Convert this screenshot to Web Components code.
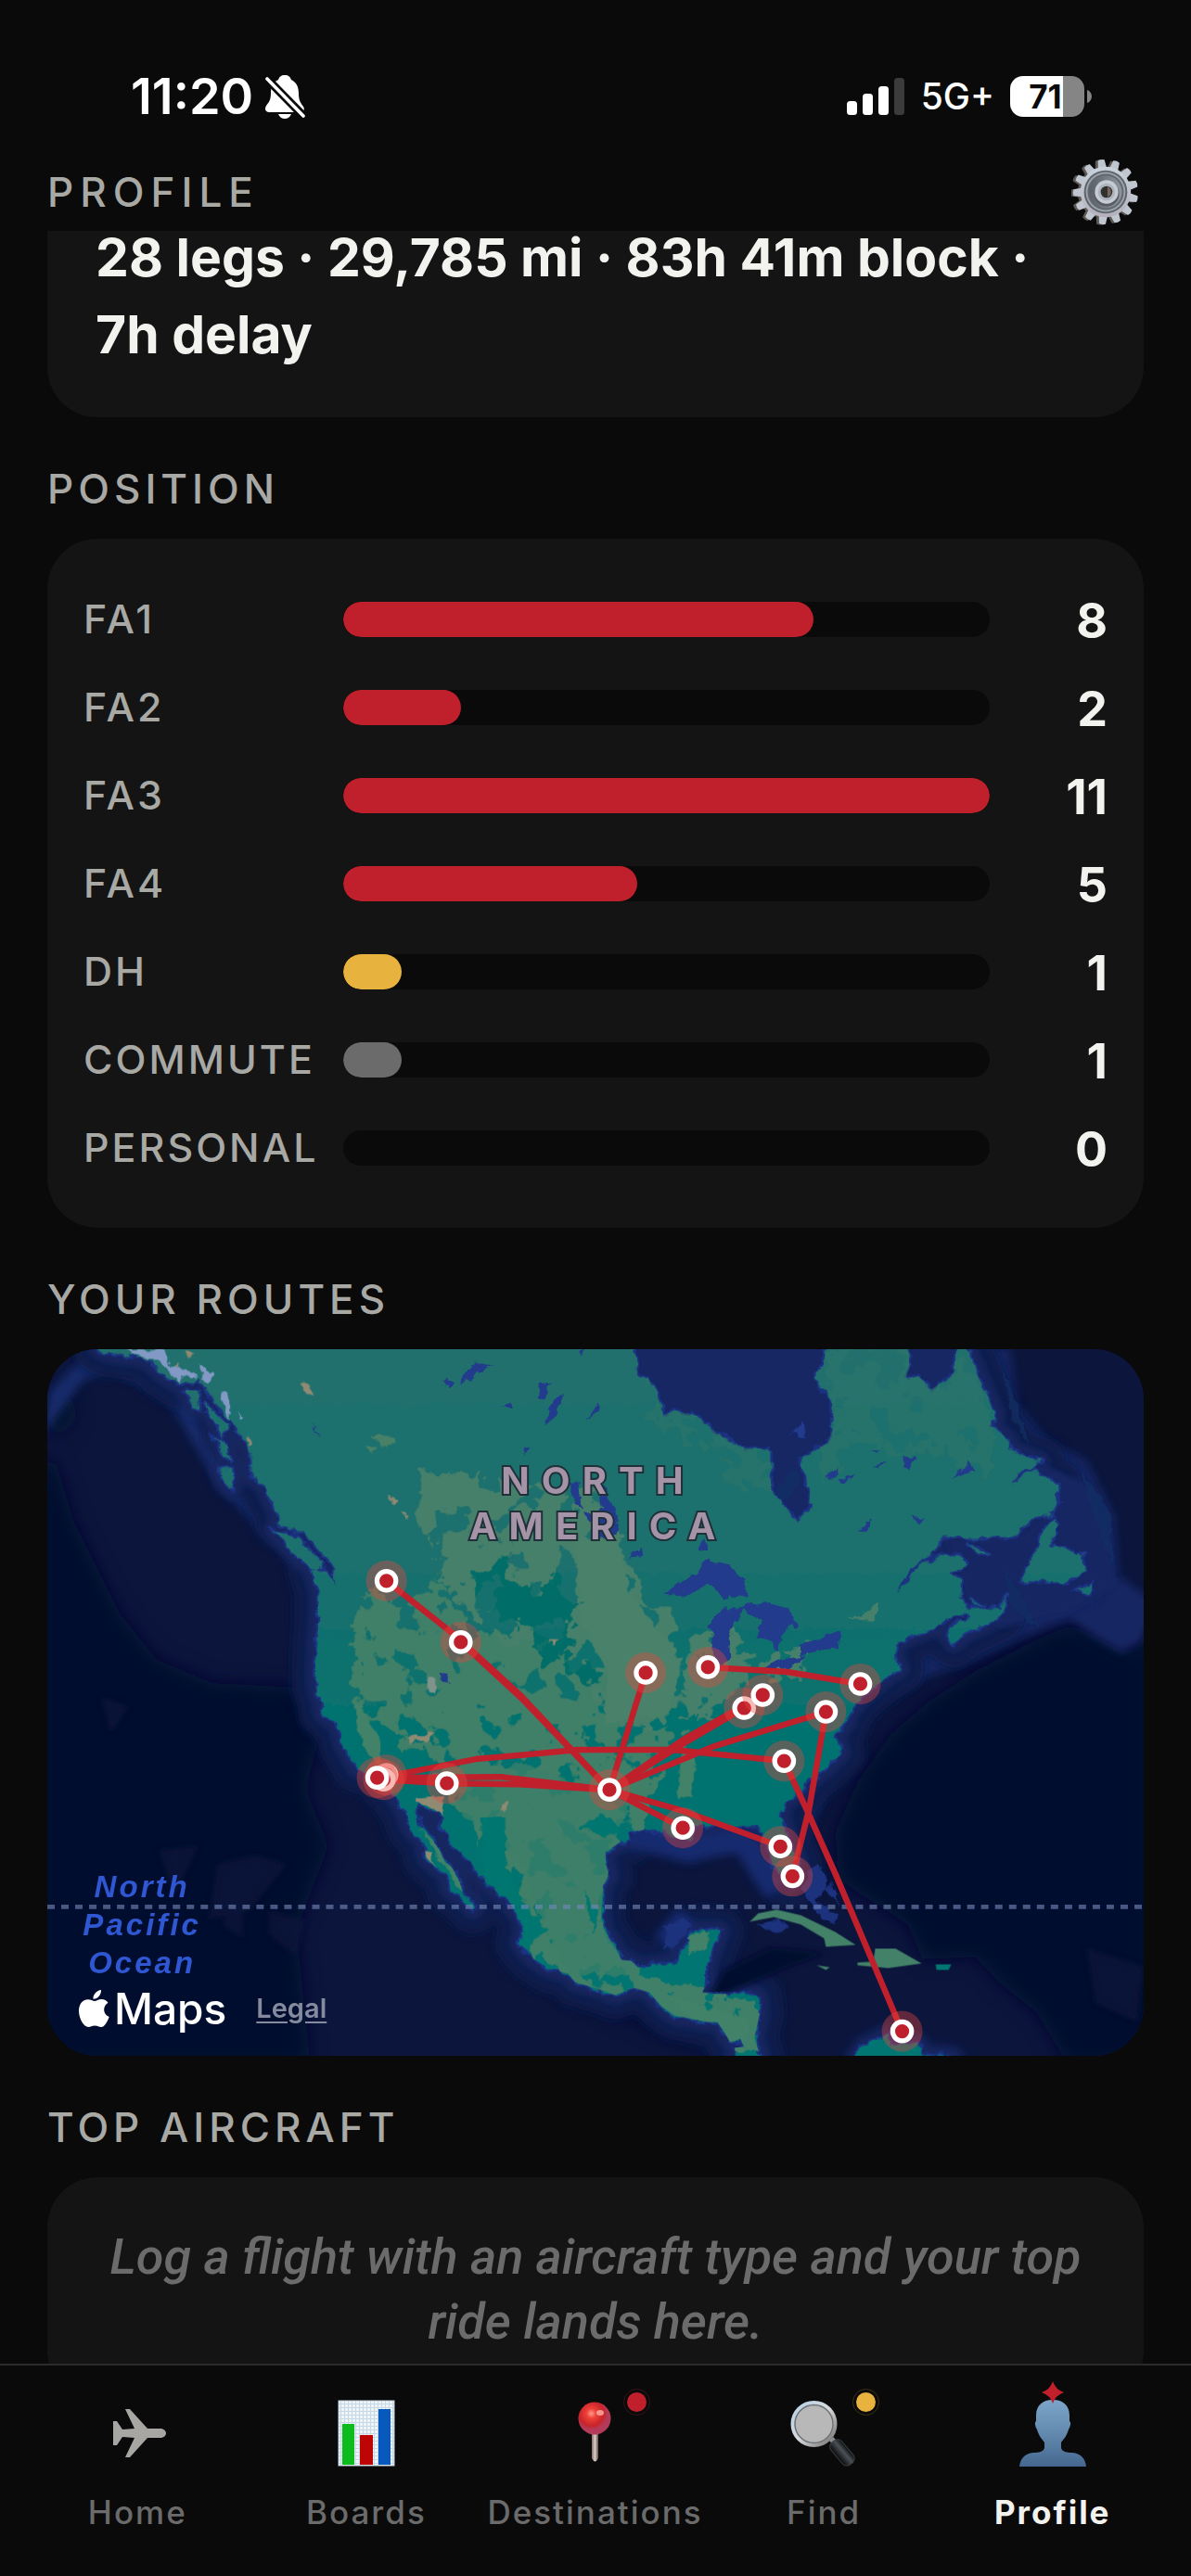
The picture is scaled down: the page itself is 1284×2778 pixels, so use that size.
<!DOCTYPE html>
<html lang="en">
<head>
<meta charset="utf-8">
<meta name="viewport" content="width=device-width, initial-scale=1">
<title>Profile</title>
<style>
  :root {
    --bg: #0a0a0a; --card: #141414; --track: #0a0a0a; --line: #2b2b2b;
    --text: #f2f2ef; --muted: #a8a8a5; --dim: #6b6b6b;
    --red: #c0202c; --gold: #e8b23f; --radius: 54px; --gutter: 51px;
  }
  * { box-sizing: border-box; }
  body {
    margin: 0; height: 100vh; display: flex; flex-direction: column; overflow: hidden;
    background: var(--bg); color: var(--text);
    font-family: Inter, "Liberation Sans", sans-serif; line-height: 1.2;
  }
  main { flex: 1; min-height: 0; padding: 0 var(--gutter); }
</style>
</head>
<body>
<status-bar></status-bar>
<page-header>PROFILE</page-header>
<main>
  <summary-card>28 legs · 29,785 mi · 83h 41m block · 7h delay</summary-card>
  <page-section heading="POSITION">
    <bar-list>
      <bar-row label="FA1" value="8" max="11"></bar-row>
      <bar-row label="FA2" value="2" max="11"></bar-row>
      <bar-row label="FA3" value="11" max="11"></bar-row>
      <bar-row label="FA4" value="5" max="11"></bar-row>
      <bar-row label="DH" value="1" max="11" style="--fill:#e8b23f"></bar-row>
      <bar-row label="COMMUTE" value="1" max="11" style="--fill:#6b6b6b"></bar-row>
      <bar-row label="PERSONAL" value="0" max="11"></bar-row>
    </bar-list>
  </page-section>
  <page-section heading="YOUR ROUTES"><route-map></route-map></page-section>
  <page-section heading="TOP AIRCRAFT">
    <empty-note>Log a flight with an aircraft type and your top ride lands here.</empty-note>
  </page-section>
</main>
<tab-bar>
  <tab-item icon="plane">Home</tab-item>
  <tab-item icon="chart">Boards</tab-item>
  <tab-item icon="pin" badge="red">Destinations</tab-item>
  <tab-item icon="search" badge="gold">Find</tab-item>
  <tab-item icon="person" active>Profile</tab-item>
</tab-bar>

<script>
const define = (name, html) => customElements.define(name, class extends HTMLElement {
  constructor() {
    super();
    this.attachShadow({ mode: 'open' }).innerHTML =
      '<style>*{box-sizing:border-box}svg{display:block}</style>' + (typeof html === 'function' ? html(this) : html);
  }
});

define('status-bar', `
<style>
  :host { display: flex; justify-content: space-between; align-items: center; height: 166px; padding: 42px 107px 0 141px; color: #fff; }
  div { display: flex; align-items: center; }
  .time { font-size: 54px; font-weight: 600; gap: 12px; }
  .right { gap: 17px; }
  .net { font-size: 39px; font-weight: 500; }
  .batt { gap: 3px; }
  .cell { width: 80px; height: 44px; border-radius: 14px; justify-content: center; padding-right: 4px;
    background: linear-gradient(90deg, #fff 71%, #858585 71%); color: #0a0a0a; font-size: 35px; font-weight: 700; }
</style>
<div class="time"><span>11:20</span>
  <svg width="44" height="48" viewBox="0 0 44 48" fill="#fff">
    <path d="M22 1c4 0 6 2 7 5 6 3 8 8 8 15 0 8 3 11 5 14 2 3 0 6-3 6H5c-4 0-5-4-3-7 3-4 5-6 5-14 0-7 3-12 8-14 1-3 3-5 7-5Z"/>
    <path d="M15 43h14c-1 3-4 5-7 5s-6-2-7-5Z"/>
    <path d="M-1 1 46 49" stroke="#0a0a0a" stroke-width="9"/>
    <path d="M3 5 42 45" stroke="#fff" stroke-width="3.6" stroke-linecap="round"/>
  </svg>
</div>
<div class="right">
  <svg width="63" height="40" viewBox="0 0 63 40" fill="#fff">
    <rect y="25" width="11" height="15" rx="3.5"/><rect x="17" y="17" width="11" height="23" rx="3.5"/>
    <rect x="34" y="9" width="11" height="31" rx="3.5"/><rect x="51" y="0" width="11" height="40" rx="3.5" fill="#3b3b3b"/>
  </svg>
  <span class="net">5G+</span>
  <div class="batt"><div class="cell">71</div>
    <svg width="5" height="14" viewBox="0 0 5 14"><path d="M0 0c3 1 5 4 5 7s-2 6-5 7Z" fill="#858585"/></svg></div>
</div>`);

const gear = () => {
  let teeth = '';
  for (let i = 0; i < 13; i++)
    teeth += `<path d="M-5-25-3.600-35.500Q0-37 3.600-35.500L5-25Z" transform="rotate(${i * 360 / 13 - 8})"/>`;
  return `<svg width="72" height="72" viewBox="-37 -37 74 74" aria-hidden="true">
    <defs><linearGradient id="m" x2="0" y2="1"><stop stop-color="#c9d3dc"/><stop offset="1" stop-color="#b4b0bb"/></linearGradient>
    <linearGradient id="d"><stop stop-color="#596067"/><stop offset="1" stop-color="#8f979e"/></linearGradient></defs>
    <g fill="#5c5853" transform="translate(-2 .5)">${teeth}<circle r="28"/></g>
    <g fill="#bfc6cf" transform="translate(1 0)">${teeth}<circle r="28" fill="url(#m)"/></g>
    <g transform="translate(1 0)"><circle r="24" fill="#5d646b"/><circle r="22" fill="#9ba2a9"/><circle r="20" fill="#60676e"/><circle r="18" fill="url(#d)"/>
    <circle cx="1" cy="2" r="14" fill="#565c62"/><circle cx="1" r="13" fill="#c5ccd5"/><circle cx="1" r="9.500" fill="#aeb4be"/><circle cx="1" r="6.500" fill="#30302f"/><path d="M2-6a6.500 6.500 0 0 1 0 12Z" fill="#75655a"/></g></svg>`;
};

define('page-header', `
<style>
  :host { display: flex; justify-content: space-between; align-items: center; height: 83px; padding: 0 57px 2px var(--gutter); }
  h1 { margin: 0; font-size: 44px; font-weight: 500; letter-spacing: 7px; line-height: 52px; color: var(--muted); }
  button { border: 0; padding: 0; background: none; }
</style>
<h1><slot></slot></h1><button aria-label="Settings">${gear()}</button>`);

define('summary-card', `
<style>
  :host { display: flow-root; background: var(--card); border-radius: 0 0 var(--radius) var(--radius); padding: 0 52px 48px; }
  p { margin: -13px 0 0; font-size: 57px; line-height: 83px; font-weight: 700; }
</style><p><slot></slot></p>`);

define('page-section', el => `
<style>
  :host { display: block; }
  h2 { margin: 0; padding: 51px 0 28px; font-size: 44px; line-height: 52px; font-weight: 500; letter-spacing: 5px; color: var(--muted); }
</style><h2>${el.getAttribute('heading')}</h2><slot></slot>`);

define('bar-list', `
<style>:host { display: flex; flex-direction: column; gap: 32px; padding: 55px 39px; background: var(--card); border-radius: var(--radius); }</style>
<slot></slot>`);

define('bar-row', el => {
  const v = +el.getAttribute('value'), m = +el.getAttribute('max');
  return `
<style>
  :host { display: grid; grid-template-columns: 280px 1fr 127px; align-items: center; height: 63px; }
  .label { font-size: 43px; font-weight: 500; letter-spacing: 3px; color: var(--muted); }
  .track { height: 38px; border-radius: 19px; background: var(--track); overflow: hidden; }
  .fill { height: 100%; width: ${v / m * 100}%; border-radius: 19px; background: var(--fill, var(--red)); }
  .value { text-align: right; font-size: 52px; line-height: 60px; padding-top: 4px; font-weight: 700; }
</style>
<span class="label">${el.getAttribute('label')}</span>
<div class="track" role="meter" aria-valuenow="${v}" aria-valuemax="${m}" aria-label="${el.getAttribute('label')}"><div class="fill"></div></div>
<span class="value">${v}</span>`;
});

define('empty-note', `
<style>
  :host { display: block; background: var(--card); border-radius: var(--radius); padding: 51px 52px; }
  p { margin: 0; text-align: center; font-family: Roboto, Inter, sans-serif; font-size: 54px; line-height: 70px; font-weight: 500; font-style: italic; color: var(--dim); }
</style><p><slot></slot></p>`);

/* Map geometry, in the drawing's own units */
const LAND = 'M107 1455 114 1459 160 1466 175 1482 192 1493 215 1490 228 1506 246 1530 262 1550 272 1567 272 1593 286 1603 291 1617 299 1630 301 1642 319 1652 328 1655 348 1675 360 1687 363 1710 358 1700 348 1693 337 1693 344 1717 344 1747 342 1780 341 1817 347 1837 348 1847 364 1860 371 1883 385 1907 400 1910 425 1937 435 1950 442 1970 457 1987 460 2003 470 2013 480 2020 485 2037 500 2048 510 2059 512 2053 508 2047 500 2043 495 2027 487 2013 480 2008 472 1990 463 1980 452 1967 449 1945 460 1948 478 1958 477 1970 487 1990 503 2003 517 2020 523 2028 547 2050 560 2065 565 2080 560 2095 570 2108 590 2122 613 2128 620 2137 647 2145 663 2151 683 2143 700 2148 713 2163 727 2173 763 2180 773 2180 780 2190 787 2202 798 2198 802 2207 792 2208 792 2225 822 2225 813 2197 819 2170 817 2153 807 2149 773 2150 757 2148 762 2137 762 2117 768 2103 776 2082 757 2081 742 2087 737 2100 728 2117 713 2117 690 2122 680 2114 670 2113 663 2100 652 2082 648 2067 650 2033 657 2023 653 2010 653 1997 667 1987 677 1985 678 1975 697 1973 713 1975 727 1980 745 1984 747 1970 780 1967 797 1970 813 1969 823 1977 830 2000 833 2013 843 2020 850 2033 859 2027 860 2010 850 1983 840 1957 848 1940 863 1933 873 1920 888 1908 898 1898 906 1890 900 1870 912 1858 914 1848 922 1838 929 1830 957 1807 969 1800 963 1783 969 1770 986 1763 1006 1755 1019 1747 1039 1738 1047 1743 1027 1752 1021 1763 1027 1772 1043 1760 1076 1745 1086 1720 1076 1735 1043 1735 1035 1723 1035 1703 1023 1697 1041 1687 1037 1677 1010 1678 990 1690 974 1710 965 1717 982 1693 1006 1673 1015 1658 1092 1658 1113 1638 1129 1635 1141 1620 1139 1600 1123 1593 1113 1585 1092 1599 1096 1590 1121 1577 1086 1563 1086 1553 1068 1538 1072 1525 1060 1497 1039 1448 1033 1448 1025 1485 1002 1500 990 1485 976 1487 980 1473 978 1448 890 1448 888 1470 879 1487 896 1510 899 1537 892 1557 863 1572 871 1610 875 1623 859 1641 843 1622 831 1607 830 1567 826 1563 798 1562 773 1547 753 1528 728 1522 714 1527 708 1502 699 1487 687 1485 685 1448 107 1448Z';
const ISLES = 'M295 1650 318 1657 335 1672 349 1688 340 1693 322 1682ZM237 1585 251 1585 251 1607 243 1600ZM201 1502 214 1502 216 1519 208 1518ZM221 1512 236 1528 246 1540 240 1548 228 1530ZM232 1550 242 1556 251 1578 240 1566ZM1135 1637 1139 1647 1131 1667 1150 1672 1166 1677 1168 1693 1150 1707 1101 1705 1111 1683 1119 1670 1123 1650ZM1160 1715 1176 1708 1174 1718ZM1041 1665 1068 1677 1051 1675ZM1045 1725 1062 1732 1050 1730ZM918 2225 929 2207 957 2192 959 2203 990 2203 994 2213 1027 2217 1030 2225Z';
const CARIB = 'M808 2072 817 2063 837 2059 863 2065 900 2083 922 2097 890 2099 888 2090 863 2075 834 2067 818 2070ZM924 2116 941 2115 943 2101 965 2101 993 2117 957 2122 924 2119ZM880 2119 894 2121 890 2124Z';
const LAKES = 'M717 1720 730 1707 750 1697 762 1681 785 1687 803 1707 807 1723 795 1720 780 1725 765 1708 740 1722ZM763 1755 777 1735 802 1733 797 1748 785 1760 787 1787 778 1798 767 1780 769 1760ZM800 1733 827 1729 850 1735 860 1753 847 1757 837 1780 827 1767 813 1768 820 1750ZM860 1775 880 1768 904 1761 902 1777 861 1785ZM820 1800 840 1790 870 1785 860 1795 843 1800ZM613 1600 622 1598 628 1628 620 1622ZM643 1598 652 1605 667 1640 663 1656 646 1659 640 1645 628 1632 648 1628ZM495 1490 513 1468 520 1472 533 1473 518 1480 507 1490ZM477 1488 488 1490 484 1497ZM582 1495 593 1493 587 1510 580 1508ZM592 1517 600 1507 607 1507 600 1527 587 1537ZM630 1530 645 1512 647 1522ZM563 1562 571 1561 567 1569ZM540 1518 551 1511 552 1517ZM678 1680 692 1670 693 1678ZM752 1672 760 1656 764 1674ZM888 1593 904 1584 898 1596ZM904 1597 922 1590 910 1600ZM972 1572 988 1571 984 1577 980 1587 973 1580ZM1027 1595 1043 1575 1051 1588 1036 1590ZM926 1650 940 1638 934 1650ZM984 1635 998 1637 992 1645ZM936 1567 948 1562 944 1567ZM944 1583 955 1577 950 1583ZM918 1541 928 1547 924 1545ZM334 1531 340 1542 347 1551 340 1544ZM474 1803 483 1804 483 1816 476 1812ZM621 1458 630 1458 627 1464Z';
const PINS = [[417,1914],[414,1919],[407,1917],[482,1923],[417,1705],[497,1771],[696,1804],[763,1798],[802,1842],[822,1828],[890,1846],[927,1816],[845,1899],[657,1930],[736,1971],[841,1991],[854,2023],[972,2190]];
const ROUTES = ['417 1705 490 1763 562 1829 657 1930','497 1771 562 1831 657 1930','696 1804 657 1930','763 1798 848 1803 927 1816','802 1842 742 1877 657 1930','822 1828 738 1875 657 1930','890 1846 770 1883 657 1930','411 1917 513 1897 623 1887 725 1887 845 1899','410 1917 540 1916 657 1930','414 1919 482 1923 560 1924 657 1930','657 1930 736 1971','657 1930 737 1953 841 1991','890 1846 872 1950 854 2023','845 1899 870 1953 900 2020 972 2190'];

define('route-map', `
<style>
  :host { display: block; position: relative; border-radius: var(--radius); overflow: hidden; aspect-ratio: 1182 / 762; background: #0c1640; }
  svg.map { width: 100%; height: 100%; }
  text { text-anchor: middle; }
  .land-label { font-family: Inter, sans-serif; font-size: 40px; font-weight: 700; letter-spacing: 13px; fill: #a594a8; stroke: #1f3038; stroke-width: 4px; paint-order: stroke; }
  .sea-label { font-family: "Liberation Sans", Arial, sans-serif; font-size: 33px; font-weight: 700; font-style: italic; letter-spacing: 3px; fill: #2f57d2; }
  .credit { position: absolute; left: 34px; bottom: 21px; display: flex; align-items: center; }
  .credit span { font-size: 46px; line-height: 60px; font-weight: 500; color: #fff; margin: 0 32px 0 5px; }
  .credit a { font-size: 29px; font-weight: 600; color: #858b9e; text-underline-offset: 4px; }
</style>
<svg class="map" viewBox="0 0 1180 762" preserveAspectRatio="xMidYMid slice" aria-hidden="true">
<defs>
  <filter id="rough" x="-5%" y="-5%" width="110%" height="110%"><feTurbulence type="fractalNoise" baseFrequency=".09" numOctaves="3" seed="4"/><feDisplacementMap in="SourceGraphic" scale="10" xChannelSelector="R" yChannelSelector="G"/></filter>
  <filter id="patch" x="-10%" y="-10%" width="120%" height="120%"><feTurbulence type="fractalNoise" baseFrequency=".045" numOctaves="4" seed="9" result="n"/>
    <feDisplacementMap in="SourceGraphic" in2="n" scale="45" xChannelSelector="R" yChannelSelector="G" result="s"/>
    <feTurbulence type="fractalNoise" baseFrequency=".035" numOctaves="4" seed="21"/>
    <feColorMatrix values="0 0 0 0 0  0 0 0 0 0  0 0 0 0 0  30 0 0 0 -17.500" result="h"/><feComposite in="s" in2="h" operator="out"/></filter>
  <filter id="b12" x="-20%" y="-20%" width="140%" height="140%"><feGaussianBlur stdDeviation="10"/></filter>
  <filter id="b6" x="-20%" y="-20%" width="140%" height="140%"><feGaussianBlur stdDeviation="5"/></filter>
  <filter id="b3"><feGaussianBlur stdDeviation="3"/></filter>
  <clipPath id="lc"><path d="${LAND}${ISLES}"/></clipPath>
  <linearGradient id="lg" x1="0" y1="0" x2="0" y2="1"><stop stop-color="#226f6e"/><stop offset=".32" stop-color="#1a6f6e"/><stop offset=".52" stop-color="#05736f"/><stop offset="1" stop-color="#007572"/></linearGradient>
</defs>
<g transform="translate(-52 -1455)">
  <rect x="52" y="1455" width="1180" height="762" fill="#0c163d"/>
  <g fill="#010d2e" filter="url(#b12)">
    <path d="M40 1570 62 1580 80 1640 105 1690 130 1740 170 1790 230 1815 325 1820 345 1870 330 1930 355 1990 320 2080 335 2225 40 2225Z"/>
    <path d="M1245 1735 1220 1785 1153 1752 1113 1770 1051 1802 1000 1835 960 1870 925 1920 900 1975 904 2027 978 2075 994 2112 1051 2110 1076 2137 1117 2170 1150 2225 1245 2225Z"/>
    <path d="M590 2135 660 2163 720 2190 770 2210 740 2205 660 2170Z"/>
    <path d="M52 1520 80 1500 84 1530 60 1560Z" opacity=".6"/>
  </g>
  <g fill="#10163a" opacity=".8" filter="url(#b3)"><path d="M172 1995 215 1990 188 2045ZM275 2000 310 2010 270 2060 225 2070 235 2010ZM290 2060 330 2070 320 2110 290 2085ZM240 2075 265 2035 262 2090ZM110 1830 140 1840 120 1870ZM1170 2100 1232 2120 1225 2180 1180 2160Z"/></g>
  <path d="M1039 1448 1088 1455 1096 1515 1130 1555 1170 1575 1200 1635 1205 1700 1245 1728 1230 1770 1208 1782 1180 1765 1153 1746 1110 1762 1050 1790 1000 1808 935 1845 922 1880 905 1910 885 1945 865 1995 845 1900 1000 1650 1100 1600Z" fill="#162764" filter="url(#b6)"/>
  <path d="M45 1550 55 1500 90 1465 120 1452 160 1460 205 1495 225 1560 270 1610 310 1660 335 1700 325 1690 280 1650 235 1600 205 1550 185 1515 160 1498 120 1478 90 1490Z" fill="#182a6a" filter="url(#b6)"/>
  <g fill="none" stroke-linejoin="round" filter="url(#b6)">
    <path d="${LAND}" stroke="#0e1a4c" stroke-width="52"/>
    <path d="${LAND}${ISLES}" stroke="#142560" stroke-width="20"/>
    <path d="M680 1980 740 1995 800 1985 835 2040M715 2095 740 2065" stroke="#172c70" stroke-width="24"/>
  </g>
  <path d="M1075 1560 1110 1575 1170 1600 1195 1650 1200 1710 1150 1740 1080 1755 1045 1740 1030 1690 1020 1660 1100 1655 1140 1620Z" fill="#162764" filter="url(#b3)"/>
  <path d="M680 1448H905V1560L870 1650H820V1590L680 1540ZM970 1448H1045V1510H970Z" fill="#172764"/>
  <path d="M780 2125 830 2100 890 2106 850 2120 800 2142 760 2160Z" fill="#020d2d" filter="url(#b3)"/>
  <g filter="url(#rough)">
    <path d="M870 2018 885 2010 892 2030 880 2050 905 2065 900 2075 880 2065 865 2035ZM888 2035 898 2032 905 2055ZM815 2075 840 2070 850 2080 830 2083ZM715 2078 738 2066 745 2078 728 2098 716 2100Z" fill="#1b317c"/>
    <path d="M1165 1585 1195 1630 1200 1690 1180 1640ZM1080 1470 1110 1560 1090 1530ZM835 1610 858 1580 862 1600 845 1620ZM1080 1690 1100 1720 1120 1760 1090 1730Z" fill="#123064" opacity=".7"/>
    <path d="M850 1548 866 1532 870 1552 855 1545Z" fill="#203a8c"/>
    <path d="${LAND}${ISLES}" fill="none" stroke="#1c3282" stroke-width="5"/>
    <path d="${LAND}${ISLES}" fill="url(#lg)"/>
  </g>
  <path d="${CARIB}" fill="#438268"/><path d="M1008 2118H1025L1022 2124H1009Z" fill="#007572"/>
  <g clip-path="url(#lc)">
    <path d="M890 1455H1030L1060 1500 1075 1560 1060 1600 1000 1560 930 1560 880 1600 895 1520ZM700 1490 760 1530 820 1570 830 1610 800 1600 760 1560 700 1530Z" fill="#2f7569" opacity=".6" filter="url(#patch)"/>
    <path d="M455 1588 500 1592 560 1600 640 1612 665 1655 680 1700 720 1745 740 1785 780 1750 800 1795 880 1775 870 1800 800 1815 770 1855 735 1862 700 1850 690 1885 600 1870 540 1780 480 1710 455 1640Z" fill="#47806a" filter="url(#patch)"/>
    <path d="M400 1715 440 1730 470 1690 500 1760 600 1780 690 1870 720 1860 690 1990 660 2000 650 2060 680 2120 740 2145 820 2160 830 2225 770 2200 640 2160 570 2110 560 2060 530 1990 460 1900 430 1870 385 1830 380 1750Z" fill="#3f7f68" filter="url(#patch)"/>
    <path d="M620 1660 665 1660 680 1720 735 1790 720 1850 650 1860 655 1800 625 1750Z" fill="#49816a" filter="url(#rough)"/>
    <path d="M560 1900 680 1945 655 2000 655 2060 690 2130 620 2130 590 2090 560 2000 500 1960 490 1930Z" fill="#3e8068" opacity=".75" filter="url(#rough)"/>
    <path d="M380 1835 390 1840 410 1875 412 1910 400 1895 385 1865ZM735 1880 750 1900 745 1935 730 1940ZM452 1970 480 1998 505 2045 490 2030ZM740 2088 765 2083 760 2100 742 2110ZM715 2150 760 2165 810 2175 800 2215 750 2180Z" fill="#438268" filter="url(#rough)"/>
    <path d="M515 1690 545 1685 570 1720 600 1690 620 1720 620 1770 590 1800 560 1750 520 1740ZM600 1790 640 1785 640 1815 615 1815Z" fill="#036d68" filter="url(#patch)"/>
    <path d="M520 1960 545 1960 545 2010 570 2060 590 2080 570 2100 545 2040 520 2010ZM625 1970 650 1955 670 1975 650 1980ZM630 2040 645 2060 640 2085Z" fill="#00766f" filter="url(#rough)"/>
    <path d="M447 1938 478 1935 478 1958 462 1946 450 1945ZM455 1995 465 1998 470 2012 458 2005ZM438 1873 468 1868 462 1876 442 1880ZM540 1945 548 1944 545 1955ZM590 1770 602 1770 597 1776ZM421 1613 428 1618 423 1621ZM432 1628 442 1634 440 1640ZM325 1490 332 1492 340 1506 332 1505ZM200 1457 208 1462 204 1467ZM188 1475 194 1470 192 1478ZM269 1547 272 1557 268 1558Z" fill="#918a72" filter="url(#rough)"/>
    <path d="M462 1806 472 1810 470 1828 462 1826Z" fill="#80938a" filter="url(#rough)"/>
    <path d="M400 1550 427 1548 424 1560 412 1558ZM395 1560 408 1560 400 1567Z" fill="#498068" filter="url(#rough)"/>
    <path d="M910 1745 930 1742 945 1728 948 1735 940 1747ZM860 1790 840 1780 870 1775Z" fill="#47806a" filter="url(#rough)"/>
  </g>
  <path d="M137 1457 178 1456 184 1474 208 1480 212 1488 196 1484 194 1494 186 1478 162 1464 148 1463ZM217 1472 230 1482 226 1492 218 1490ZM239 1504 246 1502 249 1530 243 1522ZM259 1522 262 1528 258 1530Z" fill="#8299c6" filter="url(#rough)"/>
  <path d="${LAKES}" fill="#203a8c" filter="url(#rough)"/>
  <path d="M52 2056H1232" stroke="#7488b8" stroke-opacity=".62" stroke-width="4.500" stroke-dasharray="8 7"/>
  <text class="land-label" x="645" y="1611">NORTH</text><text class="land-label" x="645" y="1660">AMERICA</text>
  <text class="sea-label" x="154" y="2046">North</text><text class="sea-label" x="154" y="2087">Pacific</text><text class="sea-label" x="154" y="2128">Ocean</text>
  <g fill="none" stroke="#c0202c" stroke-width="6.500" stroke-linejoin="round">${ROUTES.map(r => `<path d="M${r}"/>`).join('')}</g>
  ${PINS.map(([x, y]) => `<circle cx="${x}" cy="${y}" r="22" fill="#e8483c" fill-opacity=".38"/><circle cx="${x}" cy="${y}" r="10.200" fill="#c0202c" stroke="#fff" stroke-width="5.200"/>`).join('')}
</g>
</svg>
<div class="credit">
  <svg width="33" height="41" viewBox="0 0 33 41" fill="#fff" aria-hidden="true"><path d="M24 0c.5 5-4 10-8.500 9.700C15 5 19.500.5 24 0ZM17 12c2 0 4-2 7.500-2 3 0 5.500 1.500 7 3.700-6.500 4-5.300 12.800 1.200 15.300C30.500 35 27.500 40 24.200 40c-2.700 0-3.700-1.600-7-1.600S13 40 10.300 40C5.500 40 0 31 0 22.500 0 14.500 5 10.300 9.700 10.300 13 10.300 15 12 17 12Z"/></svg>
  <span>Maps</span><a href="#legal">Legal</a>
</div>`);

const ICONS = {
  plane: `<svg width="72" height="72" viewBox="0 0 72 72" fill="#a8a6a3"><path d="M10 23h4l6 9 13-1L23 10h5L47 31h13c4 0 7 2 7 5s-3 5-7 5H47L28 62h-5l10-21-13-1-6 9h-4V23Z"/></svg>`,
  chart: `<svg width="72" height="72" viewBox="0 0 72 72"><defs><pattern id="g" width="4" height="4" patternUnits="userSpaceOnUse"><rect width="4" height="4" fill="#f0f4f7"/><path d="M0 .5H4M.5 0V4" stroke="#c5dae8"/></pattern></defs>
    <rect x="6" y="1" width="60" height="70" fill="url(#g)" stroke="#c4d1da"/><rect x="10" y="26" width="13" height="44" fill="#0cbc1c"/><rect x="29" y="38" width="14" height="32" fill="#bd0505"/><rect x="49" y="10" width="13" height="60" fill="#0759bd"/></svg>`,
  pin: `<svg width="72" height="72" viewBox="0 0 72 72"><defs><radialGradient id="r" cx=".4" cy=".35"><stop stop-color="#ff9c8c"/><stop offset=".3" stop-color="#ee4038"/><stop offset=".75" stop-color="#c8242a"/><stop offset="1" stop-color="#b33a58"/></radialGradient><linearGradient id="s"><stop stop-color="#85716c"/><stop offset=".5" stop-color="#dccbc3"/><stop offset="1" stop-color="#5e504d"/></linearGradient></defs>
    <path d="M33 32h7v31q-3.500 7-7 0Z" fill="url(#s)"/><circle cx="36" cy="20" r="17.500" fill="url(#r)"/><ellipse cx="42" cy="14" rx="4" ry="3" fill="#ffb2a6" opacity=".8"/></svg>`,
  search: `<svg width="72" height="72" viewBox="0 0 72 72"><defs><linearGradient id="h" x2="1" y2="1"><stop stop-color="#b5d1e7"/><stop offset=".5" stop-color="#d7dadc"/><stop offset="1" stop-color="#706a68"/></linearGradient><linearGradient id="k"><stop stop-color="#08090a"/><stop offset=".6" stop-color="#4b5157"/><stop offset="1" stop-color="#0b0d0f"/></linearGradient></defs>
    <path d="m44 42 6 6" stroke="#8a8e92" stroke-width="6"/><rect x="-7.500" y="0" width="15" height="31" rx="6" transform="translate(46 45) rotate(-40)" fill="url(#k)" stroke="#3a4045"/>
    <circle cx="25.500" cy="26" r="23" fill="#b8b8b8" stroke="url(#h)" stroke-width="4"/><circle cx="25.500" cy="26" r="20.500" fill="none" stroke="#6e7378" stroke-width="1.500"/></svg>`,
  person: `<svg width="72" height="72" viewBox="0 0 72 72"><defs><linearGradient id="p" x2="0" y2="1"><stop stop-color="#7ca5c9"/><stop offset=".5" stop-color="#6389ae"/><stop offset="1" stop-color="#45678f"/></linearGradient></defs>
    <path d="M36 0c11 0 18 6 18 17v6c2 1 1 6-1 9-2 7-5 10-8 14v6c1 4 6 5 12 5 9 1 14 6 15 15H0c1-9 6-14 15-15 6 0 11-1 12-5v-6c-3-4-6-7-8-14-2-3-3-8-1-9v-6C18 6 25 0 36 0Z" fill="url(#p)"/></svg>`
};

define('tab-bar', `
<style>
  :host { display: block; position: relative; z-index: 1; border-top: 2px solid var(--line); background: var(--bg); }
  nav { display: grid; grid-template-columns: repeat(5, 1fr); height: 227px; padding: 37px 26px 0 25px; }
</style><nav aria-label="Main"><slot></slot></nav>`);

define('tab-item', el => `
<style>
  :host { display: block; }
  a { display: flex; flex-direction: column; align-items: center; gap: 28px; text-decoration: none; color: var(--dim); font-size: 35px; line-height: 42px; font-weight: 500; letter-spacing: 2px; }
  a.on { color: var(--text); font-weight: 700; }
  .icon { position: relative; height: 72px; }
  .badge { position: absolute; top: -8px; right: -20px; width: 21px; height: 21px; border-radius: 50%; outline: 1px solid #35151a; outline-offset: 3px; background: var(--red); }
  .badge.gold { background: var(--gold); outline-color: #3d3218; }
  .star { position: absolute; left: 24px; top: -20px; }
</style>
<a href="#${el.textContent.toLowerCase()}" ${el.hasAttribute('active') ? 'class="on" aria-current="page"' : ''}>
  <span class="icon">${ICONS[el.getAttribute('icon')]}
    ${el.hasAttribute('badge') ? `<i class="badge ${el.getAttribute('badge')}"></i>` : ''}
    ${el.hasAttribute('active') ? '<svg class="star" width="24" height="24" viewBox="0 0 24 24"><path d="M12 0q3 9 12 12-9 3-12 12-3-9-12-12 9-3 12-12Z" fill="#c0202c"/></svg>' : ''}
  </span><span><slot></slot></span>
</a>`);
</script>
</body>
</html>
